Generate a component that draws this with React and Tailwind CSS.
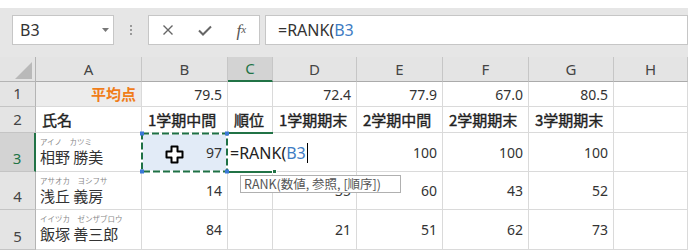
import React from "react";

const W = ["w-[36px]", "w-[106px]", "w-[86px]", "w-[45px]", "w-[84px]", "w-[86px]", "w-[86px]", "w-[85px]", "w-[74px]"];
const letters = ["A", "B", "C", "D", "E", "F", "G", "H"];

function RowHead({ n, active }) {
  return (
    <div
      className={
        "w-[36px] shrink-0 flex items-end justify-center pb-[3px] text-[15px] leading-[20px] border-b border-[#c4c4c4] " +
        (active
          ? "bg-[#d3d3d3] text-[#217346] border-r-2 border-r-[#217346]"
          : "bg-[#e4e4e4] text-[#444] border-r border-r-[#b4b4b4]")
      }
    >
      {n}
    </div>
  );
}

function Num({ i, v, extra = "" }) {
  return (
    <div className={W[i] + " shrink-0 border-r border-b border-[#dadada] flex items-center justify-end pr-[5px] text-[14px] text-[#333] " + extra}>
      {v}
    </div>
  );
}

function Hd({ i, v }) {
  return (
    <div className={W[i] + " shrink-0 border-r border-b border-[#dadada] flex items-center pl-[6px] pt-[1px] text-[15px] text-[#222] [-webkit-text-stroke:0.4px_#222] whitespace-nowrap font-['Noto_Sans_CJK_JP',sans-serif]"}>
      {v}
    </div>
  );
}

function NameCell({ kana, name }) {
  return (
    <div className="w-[106px] shrink-0 border-r border-b border-[#dadada] flex flex-col pl-[4px] pt-[4px] font-['Noto_Sans_CJK_JP',sans-serif] whitespace-nowrap">
      <span className="text-[7.5px] leading-[10px] text-[#8a8a8a]">{kana}</span>
      <span className="text-[15px] leading-[20px] text-[#333]">{name}</span>
    </div>
  );
}

export default function App() {
  return (
    <div className="w-[698px] h-[250px] bg-white overflow-hidden font-['Noto_Sans','Noto_Sans_CJK_JP',sans-serif] text-[#333]">
      {/* toolbar */}
      <div className="mt-[8px] w-[688px] h-[49px] bg-[#e6e6e6] flex items-start pt-[7px]">
        <div className="ml-[12px] w-[102px] h-[30px] bg-white border border-[#c6c6c6] flex items-center justify-between pl-[7px] pr-[4px]">
          <span className="text-[16px] leading-none text-[#333]">B3</span>
          <svg width="7" height="4" viewBox="0 0 7 4">
            <path d="M0 0H7L3.5 4Z" fill="#777" />
          </svg>
        </div>
        <div className="w-[34px] h-[30px] flex flex-col items-center justify-center gap-[2px]">
          <span className="w-[2px] h-[2px] bg-[#999]" />
          <span className="w-[2px] h-[2px] bg-[#999]" />
          <span className="w-[2px] h-[2px] bg-[#999]" />
        </div>
        <div className="w-[112px] h-[30px] bg-white border border-[#c6c6c6] flex items-center">
          <span className="w-[38px] flex justify-center">
            <svg width="12" height="12" viewBox="0 0 12 12">
              <path d="M1.5 1.5L10.5 10.5M10.5 1.5L1.5 10.5" stroke="#666" strokeWidth="1.4" />
            </svg>
          </span>
          <span className="w-[38px] flex justify-center">
            <svg width="14" height="11" viewBox="0 0 14 11">
              <path d="M1 5.5L5 9.5L13 1.5" stroke="#666" strokeWidth="2" fill="none" />
            </svg>
          </span>
          <span className="w-[36px] flex justify-center font-['Liberation_Serif',serif] italic text-[17px] text-[#555] leading-none">
            f<span className="text-[11px] relative top-[2px]">x</span>
          </span>
        </div>
        <div className="ml-[5px] flex-1 h-[30px] bg-white border border-[#c6c6c6] flex items-center pl-[12px] text-[16px] text-[#333]">
          =RANK(<span className="text-[#3e7cc3]">B3</span>
        </div>
      </div>

      {/* grid */}
      <div className="relative w-[688px]">
        {/* header row */}
        <div className="flex h-[25px]">
          <div className="w-[36px] shrink-0 bg-[#e4e4e4] border-r border-b border-[#b4b4b4] relative">
            <svg className="absolute left-0 top-0" width="36" height="25" viewBox="0 0 36 25">
              <path d="M15 22H32V5Z" fill="#b9b9b9" />
            </svg>
          </div>
          {letters.map((l, k) => (
            <div
              key={l}
              className={
                W[k + 1] +
                " shrink-0 flex items-center justify-center text-[15px] border-r border-r-[#c6c6c6] " +
                (l === "C"
                  ? "bg-[#d3d3d3] text-[#217346] border-b-2 border-b-[#217346]"
                  : "bg-[#e4e4e4] text-[#444] border-b border-b-[#ababab]")
              }
            >
              {l}
            </div>
          ))}
        </div>

        {/* row 1 */}
        <div className="flex h-[25px]">
          <RowHead n="1" />
          <div className="w-[106px] shrink-0 bg-[#ececec] border-r border-b border-[#dadada] flex items-center justify-end pr-[5px] text-[15px] font-bold text-[#f07d1a] font-['Noto_Sans_CJK_JP',sans-serif]">
            平均点
          </div>
          <Num i={2} v="79.5" />
          <Num i={3} v="" />
          <Num i={4} v="72.4" />
          <Num i={5} v="77.9" />
          <Num i={6} v="67.0" />
          <Num i={7} v="80.5" />
          <Num i={8} v="" />
        </div>

        {/* row 2 */}
        <div className="flex h-[26px]">
          <RowHead n="2" />
          <Hd i={1} v="氏名" />
          <Hd i={2} v="1学期中間" />
          <Hd i={3} v="順位" />
          <Hd i={4} v="1学期期末" />
          <Hd i={5} v="2学期中間" />
          <Hd i={6} v="2学期期末" />
          <Hd i={7} v="3学期期末" />
          <Hd i={8} v="" />
        </div>

        {/* row 3 */}
        <div className="flex h-[39px]">
          <RowHead n="3" active />
          <NameCell kana="アイノ　カツミ" name="相野 勝美" />
          <Num i={2} v="97" extra="bg-[#e2ebf7]" />
          <Num i={3} v="" />
          <Num i={4} v="" />
          <Num i={5} v="100" />
          <Num i={6} v="100" />
          <Num i={7} v="100" />
          <Num i={8} v="" />
        </div>

        {/* row 4 */}
        <div className="flex h-[38px]">
          <RowHead n="4" />
          <NameCell kana="アサオカ　ヨシフサ" name="浅丘 義房" />
          <Num i={2} v="14" />
          <Num i={3} v="" />
          <Num i={4} v="35" />
          <Num i={5} v="60" />
          <Num i={6} v="43" />
          <Num i={7} v="52" />
          <Num i={8} v="" />
        </div>

        {/* row 5 */}
        <div className="flex h-[40px]">
          <RowHead n="5" />
          <NameCell kana="イイヅカ　ゼンザブロウ" name="飯塚 善三郎" />
          <Num i={2} v="84" />
          <Num i={3} v="" />
          <Num i={4} v="21" />
          <Num i={5} v="51" />
          <Num i={6} v="62" />
          <Num i={7} v="73" />
          <Num i={8} v="" />
        </div>

        {/* marching ants around B3 */}
        <svg className="absolute left-[139px] top-[73px]" width="92" height="46" viewBox="0 0 92 46">
          <rect x="3" y="3.5" width="85" height="38" fill="none" stroke="#ffffff" strokeWidth="2" />
          <rect x="3" y="3.5" width="85" height="38" fill="none" stroke="#1e7145" strokeWidth="2" strokeDasharray="7 3" />
          <rect x="1" y="1.5" width="4" height="4" fill="#3c78d8" />
          <rect x="86" y="1.5" width="4" height="4" fill="#3c78d8" />
          <rect x="1" y="39.5" width="4" height="4" fill="#3c78d8" />
          <rect x="86" y="39.5" width="4" height="4" fill="#3c78d8" />
        </svg>

        {/* cursor cross */}
        <svg className="absolute left-[165px] top-[88px]" width="19" height="19" viewBox="0 0 19 19">
          <path d="M6.5 1.5H12.5V6.5H17.5V12.5H12.5V17.5H6.5V12.5H1.5V6.5H6.5Z" fill="#fff" stroke="#000" strokeWidth="2" strokeLinejoin="round" />
        </svg>

        {/* editing C3 */}
        <div className="absolute left-[229px] top-[77px] w-[82px] h-[37px] bg-white flex items-center pl-[1px] text-[16px] text-[#222] whitespace-nowrap">
          =RANK(<span className="text-[#3e7cc3]">B3</span>
          <span className="ml-[1px] w-[1px] h-[20px] bg-black" />
        </div>
        <div className="absolute left-[229px] top-[75px] w-[44px] h-[2px] bg-[#217346]" />
        <div className="absolute left-[229px] top-[114px] w-[45px] h-[2px] bg-[#217346]" />
        <div className="absolute left-[272px] top-[112px] w-[5px] h-[5px] bg-[#217346] border border-white" />

        {/* tooltip */}
        <div className="absolute left-[240px] top-[118px] h-[18px] w-[161px] bg-white border border-[#b0b0b0] flex items-center pl-[3px] text-[12.5px] text-[#555] whitespace-nowrap font-['Noto_Sans_CJK_JP',sans-serif]">
          RANK(数値, 参照, [順序])
        </div>
      </div>
    </div>
  );
}
